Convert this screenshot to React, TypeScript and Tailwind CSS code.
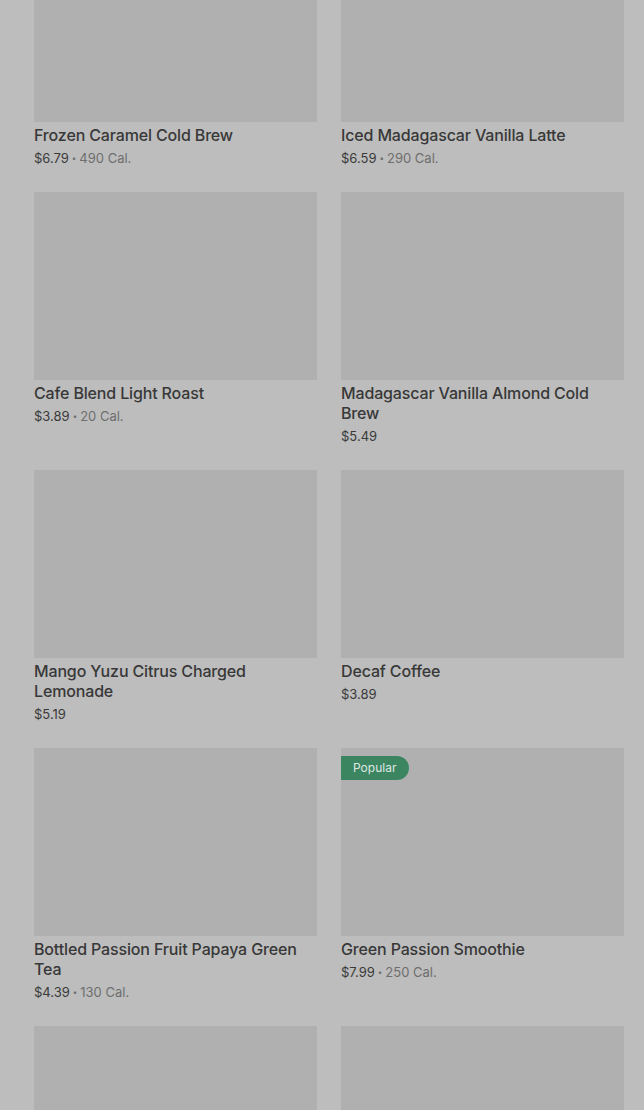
import React from "react";

type Item = { name: string; price: string; cal?: string; popular?: boolean };

const items: Item[] = [
  { name: "Frozen Caramel Cold Brew", price: "$6.79", cal: "490 Cal." },
  { name: "Iced Madagascar Vanilla Latte", price: "$6.59", cal: "290 Cal." },
  { name: "Cafe Blend Light Roast", price: "$3.89", cal: "20 Cal." },
  { name: "Madagascar Vanilla Almond Cold Brew", price: "$5.49" },
  { name: "Mango Yuzu Citrus Charged Lemonade", price: "$5.19" },
  { name: "Decaf Coffee", price: "$3.89" },
  { name: "Bottled Passion Fruit Papaya Green Tea", price: "$4.39", cal: "130 Cal." },
  { name: "Green Passion Smoothie", price: "$7.99", cal: "250 Cal.", popular: true },
  { name: "", price: "" },
  { name: "", price: "" },
];

function Card({ item }: { item: Item }) {
  return (
    <div className="flex flex-col">
      <div className="relative h-[188px] bg-[#b0b0b0]">
        {item.popular && (
          <div className="absolute left-0 top-[8px] h-[24px] w-[68px] rounded-r-full bg-[#3b8661] pl-[12px] text-[12px] leading-[24px] text-[#dfe7e2]">
            Popular
          </div>
        )}
      </div>
      {item.name && (
        <>
          <div className="mt-[3px] text-[16px] font-medium leading-[20px] tracking-[-0.15px] text-[#383838]">
            {item.name}
          </div>
          <div className="mt-[3px] flex items-center text-[13px] leading-[20px] text-[#3a3a3a]">
            <span>{item.price}</span>
            {item.cal && (
              <>
                <span className="mx-[3px] text-[8px] text-[#6e6e6e]">•</span>
                <span className="text-[#6e6e6e]">{item.cal}</span>
              </>
            )}
          </div>
        </>
      )}
    </div>
  );
}

export default function App() {
  return (
    <div
      className="h-[1110px] overflow-hidden bg-[#bdbdbd]"
      style={{ fontFamily: "Inter, 'Noto Sans', sans-serif" }}
    >
      <div className="-mt-[66px] grid grid-cols-2 gap-x-[24px] gap-y-[24px] pl-[34px] pr-[20px]">
        {items.map((it, i) => (
          <Card key={i} item={it} />
        ))}
      </div>
    </div>
  );
}
